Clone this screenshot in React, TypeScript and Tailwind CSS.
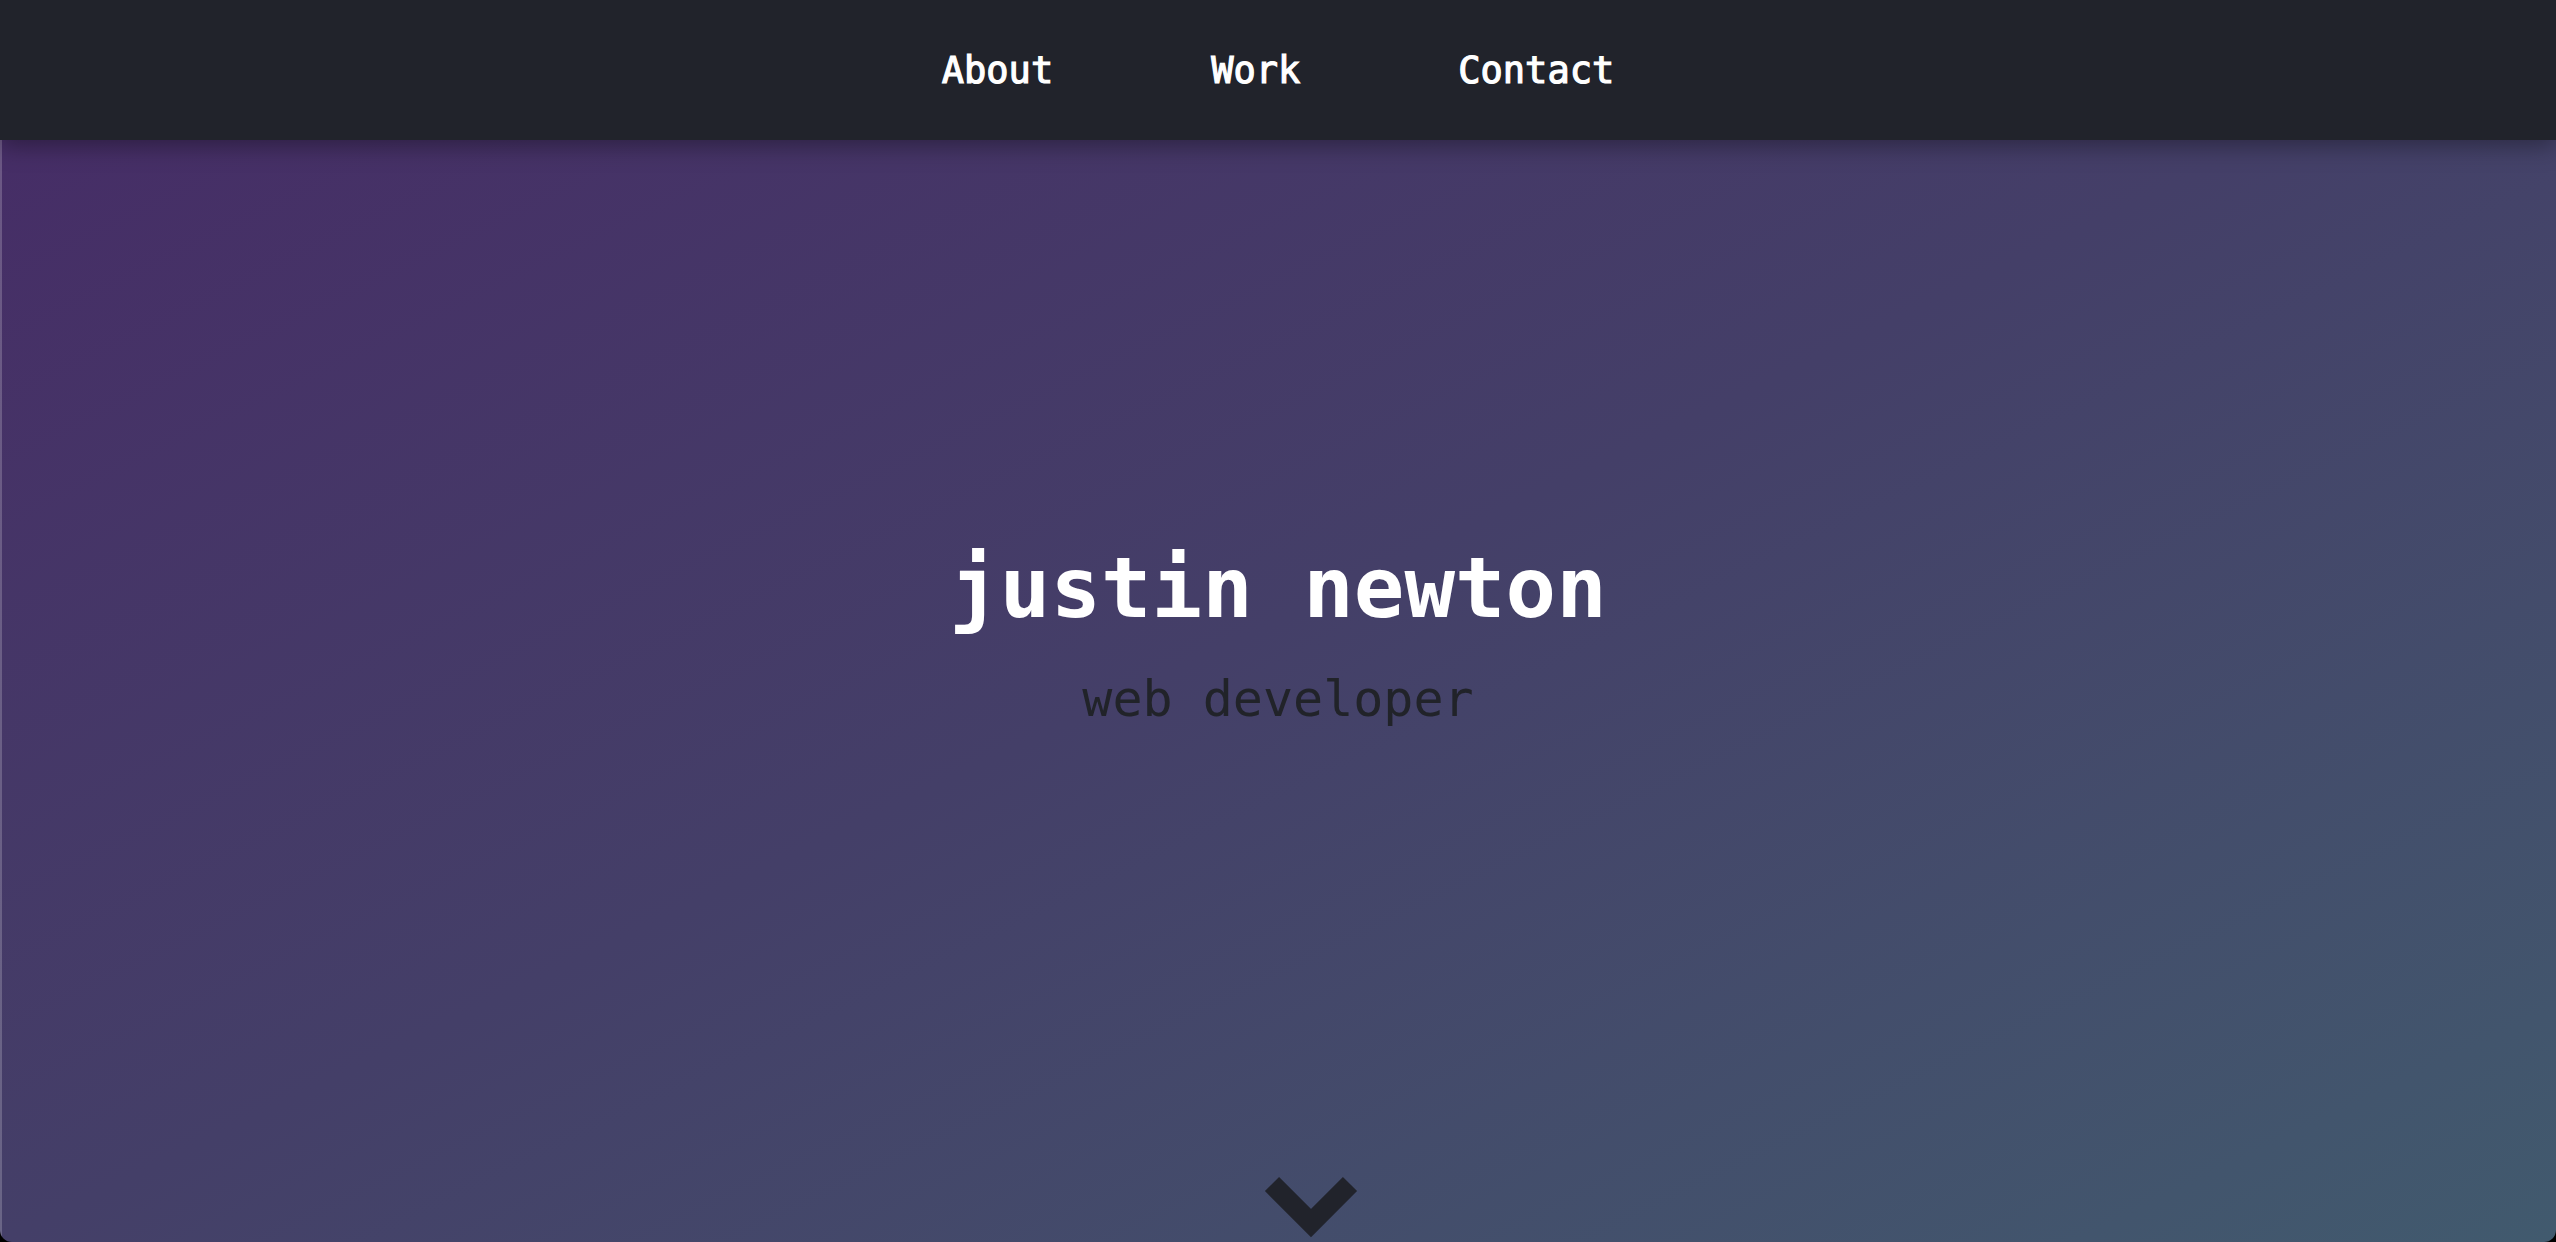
import React from "react";

export default function App() {
  return (
    <div className="w-[2556px] h-[1242px] bg-black overflow-hidden">
      <div
        className="relative w-full h-full flex flex-col rounded-b-[12px] overflow-hidden bg-linear-to-br from-[#462b66] via-[#443f68] to-[#415a6e]"
        style={{ fontFamily: '"DejaVu Sans Mono", "Liberation Mono", monospace' }}
      >
        <nav className="relative z-10 h-[140px] shrink-0 bg-[#21232b] flex items-center justify-center gap-[158px] shadow-[0_6px_22px_rgba(0,0,0,0.35)]">
          <a className="text-white text-[37px] leading-none [-webkit-text-stroke:1.2px_white]">About</a>
          <a className="text-white text-[37px] leading-none [-webkit-text-stroke:1.2px_white]">Work</a>
          <a className="text-white text-[37px] leading-none [-webkit-text-stroke:1.2px_white]">Contact</a>
        </nav>
        <main className="flex-1 flex flex-col items-center pt-[406px] pb-[4px]">
          <h1 className="text-white text-[84px] leading-none font-bold">justin newton</h1>
          <h2 className="text-[#212329] text-[50px] leading-none mt-[44px]">web developer</h2>
          <div className="mt-auto ml-[66px]">
            <svg width="96" height="62" viewBox="0 0 96 62">
              <polyline
                points="9,8 48,47 87,8"
                fill="none"
                stroke="#21232b"
                strokeWidth="20"
                strokeLinecap="butt"
                strokeLinejoin="miter"
              />
            </svg>
          </div>
        </main>
        <div className="absolute left-0 top-0 bottom-0 w-[2px] bg-white/20 pointer-events-none" />
      </div>
    </div>
  );
}
